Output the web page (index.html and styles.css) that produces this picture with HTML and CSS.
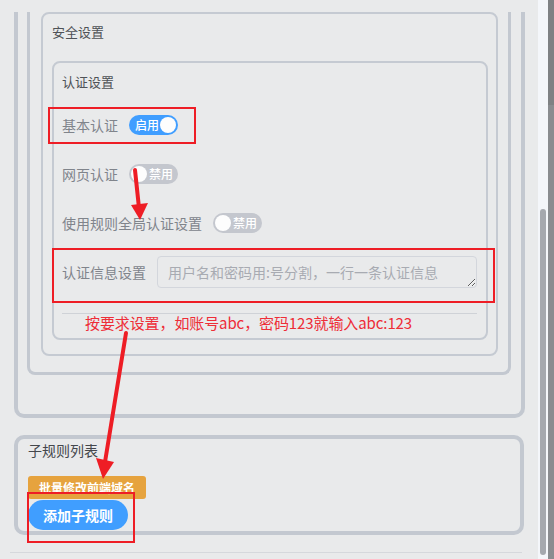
FILE: index.html
```html
<!DOCTYPE html>
<html lang="zh-CN">
<head>
    <meta charset="UTF-8">
    <meta name="viewport" content="width=device-width, initial-scale=1.0">
    <title>规则设置</title>
    <link rel="stylesheet" href="styles.css">
</head>
<body>
<div class="screen">
    <div class="viewport">
        <div class="shell">
            <div class="group">
                <section class="card card-security">
                    <div class="card-title">安全设置</div>
                    <section class="card card-auth">
                        <div class="card-title">认证设置</div>
                        <div class="form-row">
                            <label class="form-label">基本认证</label>
                            <span class="switch is-on"><span class="switch-text">启用</span><span class="switch-knob"></span></span>
                        </div>
                        <div class="form-row">
                            <label class="form-label">网页认证</label>
                            <span class="switch"><span class="switch-knob"></span><span class="switch-text">禁用</span></span>
                        </div>
                        <div class="form-row">
                            <label class="form-label">使用规则全局认证设置</label>
                            <span class="switch"><span class="switch-knob"></span><span class="switch-text">禁用</span></span>
                        </div>
                        <div class="form-row">
                            <label class="form-label">认证信息设置</label>
                            <textarea class="form-textarea" placeholder="用户名和密码用:号分割，一行一条认证信息"></textarea>
                        </div>
                        <div class="divider"></div>
                    </section>
                </section>
            </div>
        </div>

        <div class="sub-rules">
            <div class="sub-title">子规则列表</div>
            <button class="btn btn-warning">批量修改前端域名</button>
            <button class="btn btn-primary">添加子规则</button>
        </div>
        <div class="bottom-line"></div>

        <!-- 标注层 -->
        <svg class="marks" width="538" height="559" viewBox="0 0 538 559">
            <rect x="49" y="108" width="146" height="35" fill="none" stroke="#ee1d25" stroke-width="2"/>
            <rect x="53" y="249" width="441" height="53" fill="none" stroke="#ee1d25" stroke-width="2"/>
            <rect x="28" y="493" width="106" height="49" fill="none" stroke="#ee1d25" stroke-width="2"/>
            <line x1="135" y1="170" x2="139" y2="208" stroke="#ee1d25" stroke-width="4" stroke-linecap="round"/>
            <polygon points="131,205 148,203 140,220" fill="#ee1d25"/>
            <line x1="126" y1="333" x2="105" y2="462" stroke="#ee1d25" stroke-width="4" stroke-linecap="round"/>
            <polygon points="96,458 114,462 103,479" fill="#ee1d25"/>
        </svg>
        <span class="note">按要求设置，如账号abc，密码123就输入abc:123</span>
    </div>
    <div class="scroll-track"><div class="scroll-thumb"></div></div>
    <div class="edge"></div>
</div>
</body>
</html>
```

FILE: styles.css
```css
body {
    margin: 0;
    background-color: #e9eaeb;
    font-family: "Noto Sans CJK SC", "Noto Sans", sans-serif;
}

.screen {
    display: flex;
    height: 559px;
    overflow: hidden;
}

.viewport {
    position: relative; /* 标注层相对于此定位 */
    width: 538px;
    flex: none;
}

/* 外层两个容器，顶部已滚出视口 */
.shell {
    box-sizing: border-box;
    width: 511px;
    margin-left: 14px;
    border: 4px solid #c3c8d0;
    border-top: none;
    border-radius: 0 0 10px 10px;
    padding-bottom: 39px;
}
.group {
    margin: 0 10px 0 9px;
    border: 3px solid #c3c8d0;
    border-top: none;
    border-radius: 0 0 8px 8px;
    padding-bottom: 16px;
}

.card {
    border: 2px solid #c5cad2;
    border-radius: 8px;
}
.card-security {
    margin: 12px 10px 0 11px;
    padding: 8px 0 14px 0;
}
.card-security > .card-title {
    padding-left: 9px;
    margin-bottom: 19px;
}
.card-auth {
    margin: 0 8px 0 9px;
    padding: 9px 9px 24px 8px;
}
.card-auth > .card-title {
    margin-bottom: 17px;
}
.card-title {
    font-size: 13px;
    line-height: 20px;
    color: #4f5257;
}

.form-row {
    display: flex;
    align-items: center;
    height: 32px;
    margin-bottom: 17px;
}
.form-row:last-of-type {
    margin-bottom: 0;
}
.form-label {
    font-size: 14px;
    color: #80848b;
    margin-right: 11px;
    white-space: nowrap;
}

.switch {
    display: inline-flex;
    align-items: center;
    box-sizing: border-box;
    width: 49px;
    height: 20px;
    padding: 0 2px;
    border-radius: 10px;
    background-color: #c4c7ce;
    flex: none;
}
.switch.is-on {
    background-color: #409eff;
    justify-content: space-between;
}
.switch-knob {
    width: 16px;
    height: 16px;
    border-radius: 50%;
    background-color: #fdfdfd;
    flex: none;
}
.switch-text {
    font-size: 12px;
    font-weight: 500;
    line-height: 20px;
    color: #fff;
    padding-left: 2px;
    white-space: nowrap;
}
.switch.is-on .switch-text {
    padding-left: 4px;
}

.form-textarea {
    flex: 1;
    box-sizing: border-box;
    height: 32px;
    padding: 5px 10px;
    border: 1px solid #d3d6dc;
    border-radius: 4px;
    background: transparent;
    font-family: inherit;
    font-size: 14px;
    line-height: 20px;
    color: #555;
    resize: vertical;
    outline: none;
}
.form-textarea::placeholder {
    color: #a8abb2;
}

.divider {
    height: 1px;
    margin-top: 25px;
    background-color: #cfd2d7;
}

.sub-rules {
    box-sizing: border-box;
    width: 510px;
    margin: 17px 0 0 14px;
    border: 4px solid #c3c8d0;
    border-radius: 10px;
    padding: 1px 10px;
}
.sub-title {
    font-size: 14px;
    line-height: 20px;
    color: #44474c;
    margin-bottom: 16px;
}
.btn {
    display: block;
    border: none;
    color: #fff;
    font-family: inherit;
    font-weight: bold;
    cursor: pointer;
    padding: 0;
}
.btn-warning {
    width: 118px;
    height: 23px;
    font-size: 12px;
    border-radius: 3px;
    background-color: #e6a33e;
}
.btn-primary {
    width: 100px;
    height: 30px;
    margin-top: 1px;
    font-size: 14px;
    border-radius: 15px;
    background-color: #409eff;
}

.bottom-line {
    height: 1px;
    margin: 17px 16px 0 10px;
    background-color: #d6d8dc;
}

.marks {
    position: absolute;
    top: 0;
    left: 0;
    pointer-events: none;
}
.note {
    position: absolute;
    left: 85px;
    top: 313px;
    font-size: 15px;
    line-height: 20px;
    letter-spacing: -0.1px;
    color: #ee2d37;
    white-space: nowrap;
}

.scroll-track {
    width: 10px;
    flex: none;
    background-color: #f4f6fa;
    padding-top: 209px;
}
.scroll-thumb {
    width: 6px;
    height: 346px;
    margin-left: 2px;
    border-radius: 3px;
    background-color: #a5a8ae;
}
.edge {
    width: 6px;
    flex: none;
    background: linear-gradient(#7f8184 0, #7f8184 105px, #8a8c90 105px);
}
```
